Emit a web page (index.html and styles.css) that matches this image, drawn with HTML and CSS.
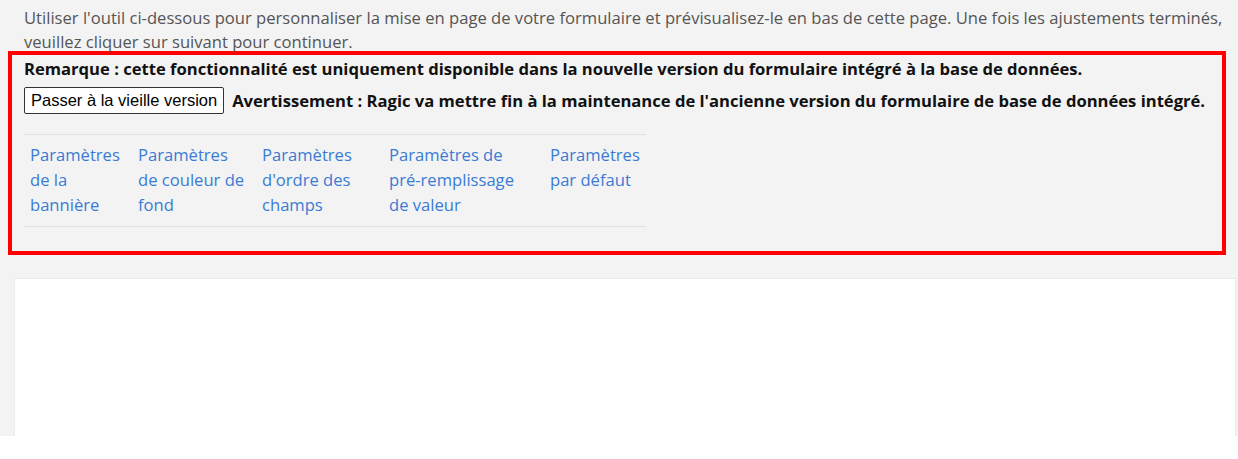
FILE: index.html
```html
<!DOCTYPE html>
<html lang="fr">
<head>
    <meta charset="UTF-8">
    <meta name="viewport" content="width=device-width, initial-scale=1.0">
    <title>Mise en page du formulaire</title>
    <link rel="stylesheet" href="styles.css">
</head>
<body>

<div class="page">
    <p class="intro">Utiliser l'outil ci-dessous pour personnaliser la mise en page de votre formulaire et prévisualisez-le en bas de cette page. Une fois les ajustements terminés, veuillez cliquer sur suivant pour continuer.</p>

    <section class="notice">
        <p class="note">Remarque : cette fonctionnalité est uniquement disponible dans la nouvelle version du formulaire intégré à la base de données.</p>
        <div class="version-row">
            <button type="button" class="old-version">Passer à la vieille version</button>
            <span class="note">Avertissement : Ragic va mettre fin à la maintenance de l'ancienne version du formulaire de base de données intégré.</span>
        </div>

        <table class="settings">
            <tr>
                <td class="col1"><a href="#">Paramètres de la bannière</a></td>
                <td class="col2"><a href="#">Paramètres de couleur de fond</a></td>
                <td class="col3"><a href="#">Paramètres d'ordre des champs</a></td>
                <td class="col4"><a href="#">Paramètres de <span class="nowrap">pré-remplissage</span> de valeur</a></td>
                <td class="col5"><a href="#">Paramètres par défaut</a></td>
            </tr>
        </table>
    </section>

    <div class="preview"></div>
</div>

</body>
</html>
```

FILE: styles.css
```css
body {
    margin: 0;
    background-color: #fff;
    font-family: 'Open Sans', 'Noto Sans', sans-serif;
}

.page {
    background-color: #f3f3f3;
    height: 436px;
    padding: 6px 2px 0 8px;
    box-sizing: border-box;
    overflow: hidden;
}

.intro {
    margin: 0 4px 0 16px;
    font-size: 16.6px;
    line-height: 24px;
    color: #555;
}

.notice {
    margin: -3px 10px 0 0;
    border: 4px solid #ff0000;
    padding: 2px 12px 24px 12px;
}

.note {
    margin: 0;
    font-size: 16.6px;
    line-height: 24px;
    font-weight: bold;
    color: #111;
}

.version-row {
    display: flex;
    align-items: center;
    gap: 8px;
    margin-top: 6px;
}

.old-version {
    font-family: 'Liberation Sans', Arial, sans-serif;
    font-size: 16.5px;
    line-height: 19px;
    padding: 3px 6px;
    background-color: #fff;
    color: #000;
    border: 1px solid #333;
    border-radius: 2px;
}

.settings {
    border-collapse: collapse;
    table-layout: fixed;
    margin-top: 20px;
}

.settings td {
    border-top: 1px solid #e2e2e2;
    border-bottom: 1px solid #e2e2e2;
    padding: 7px 10px 9px 6px;
    vertical-align: top;
    font-size: 16.6px;
    line-height: 25px;
}

.settings a {
    color: #3a7bd5;
    text-decoration: none;
}

.nowrap {
    white-space: nowrap;
}

.col1 { width: 92px; }
.col2 { width: 108px; }
.col3 { width: 111px; }
.col4 { width: 145px; }
.col5 { width: 92px; }

.settings td.col5 {
    padding-right: 4px;
}

.preview {
    margin-top: 23px;
    margin-left: 6px;
    height: 200px;
    background-color: #fff;
    border: 1px solid #ebebeb;
}
```
